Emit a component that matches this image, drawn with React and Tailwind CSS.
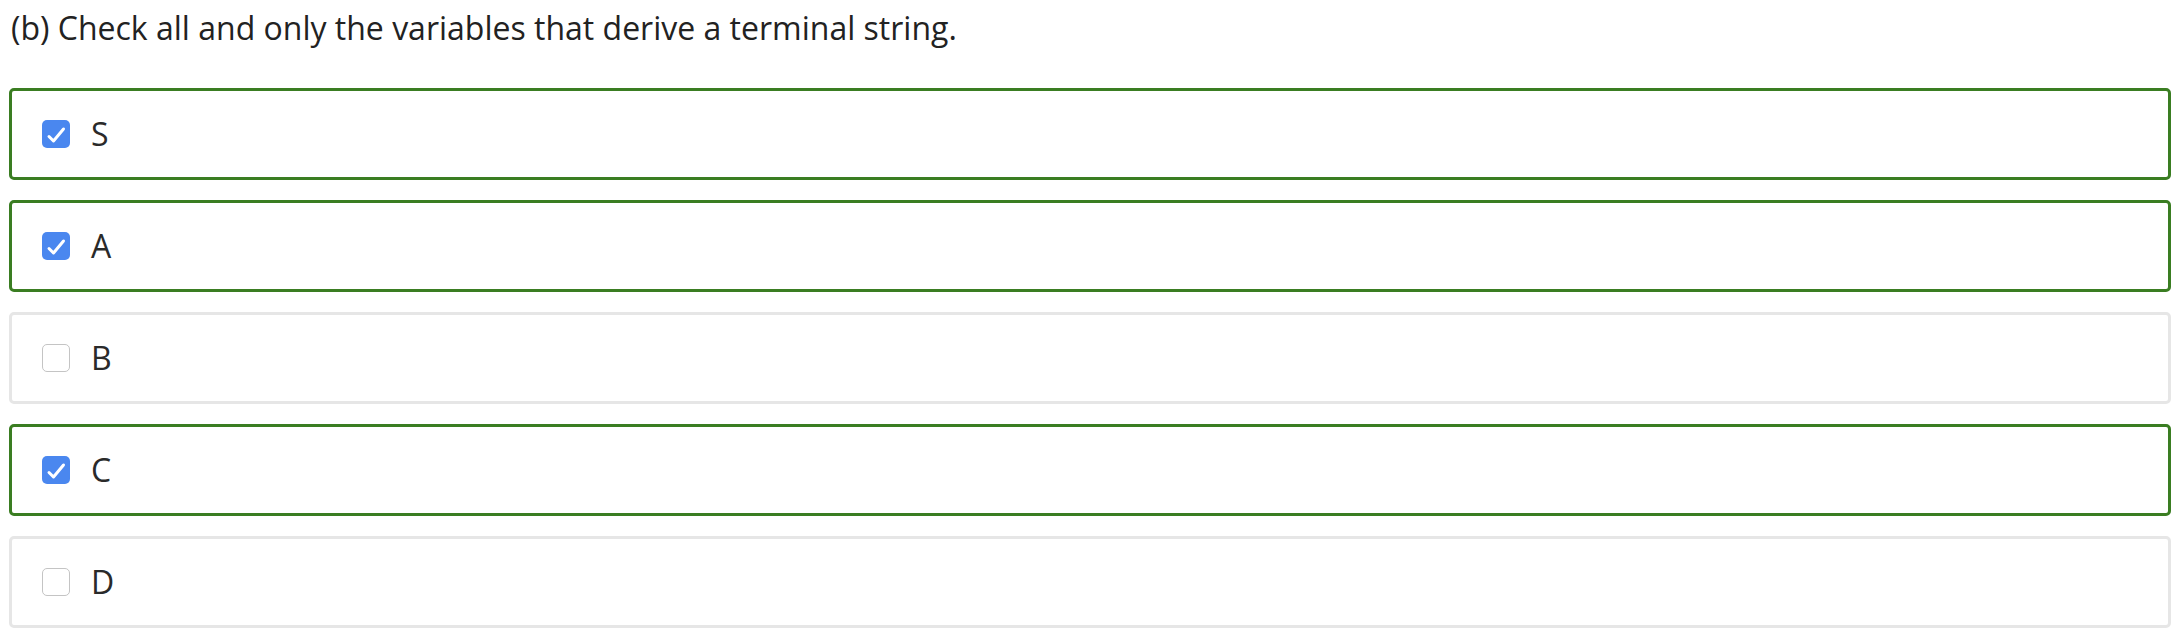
import React from "react";

const options = [
  { label: "S", checked: true },
  { label: "A", checked: true },
  { label: "B", checked: false },
  { label: "C", checked: true },
  { label: "D", checked: false },
];

function Box({ checked }) {
  if (checked) {
    return (
      <span className="flex h-[28px] w-[28px] shrink-0 items-center justify-center rounded-[5px] bg-[#4a87ef]">
        <svg width="28" height="28" viewBox="0 0 28 28" fill="none">
          <path d="M7 16.5l4.5 4.5L21.5 9" stroke="white" strokeWidth="3" strokeLinecap="round" strokeLinejoin="round" />
        </svg>
      </span>
    );
  }
  return <span className="h-[28px] w-[28px] shrink-0 rounded-[5px] border border-[#c4c4c4] bg-white" />;
}

export default function App() {
  return (
    <div className="min-h-screen bg-white pl-[9px] pr-[11px] text-[#222]" style={{ fontFamily: '"Open Sans", sans-serif' }}>
      <div className="pt-[6px] pb-[38px] pl-[2px] text-[32px] leading-[44px]">
        (b) Check all and only the variables that derive a terminal string.
      </div>
      <div className="flex flex-col gap-[20px]">
        {options.map((o) => (
          <label
            key={o.label}
            className={
              "flex h-[92px] items-center gap-[21px] rounded-[5px] border-[3px] pl-[30px] " +
              (o.checked ? "border-[#3a7d22]" : "border-[#e6e6e6]")
            }
          >
            <Box checked={o.checked} />
            <span className="text-[32px] leading-none text-[#2a2a2a]">{o.label}</span>
          </label>
        ))}
      </div>
    </div>
  );
}
